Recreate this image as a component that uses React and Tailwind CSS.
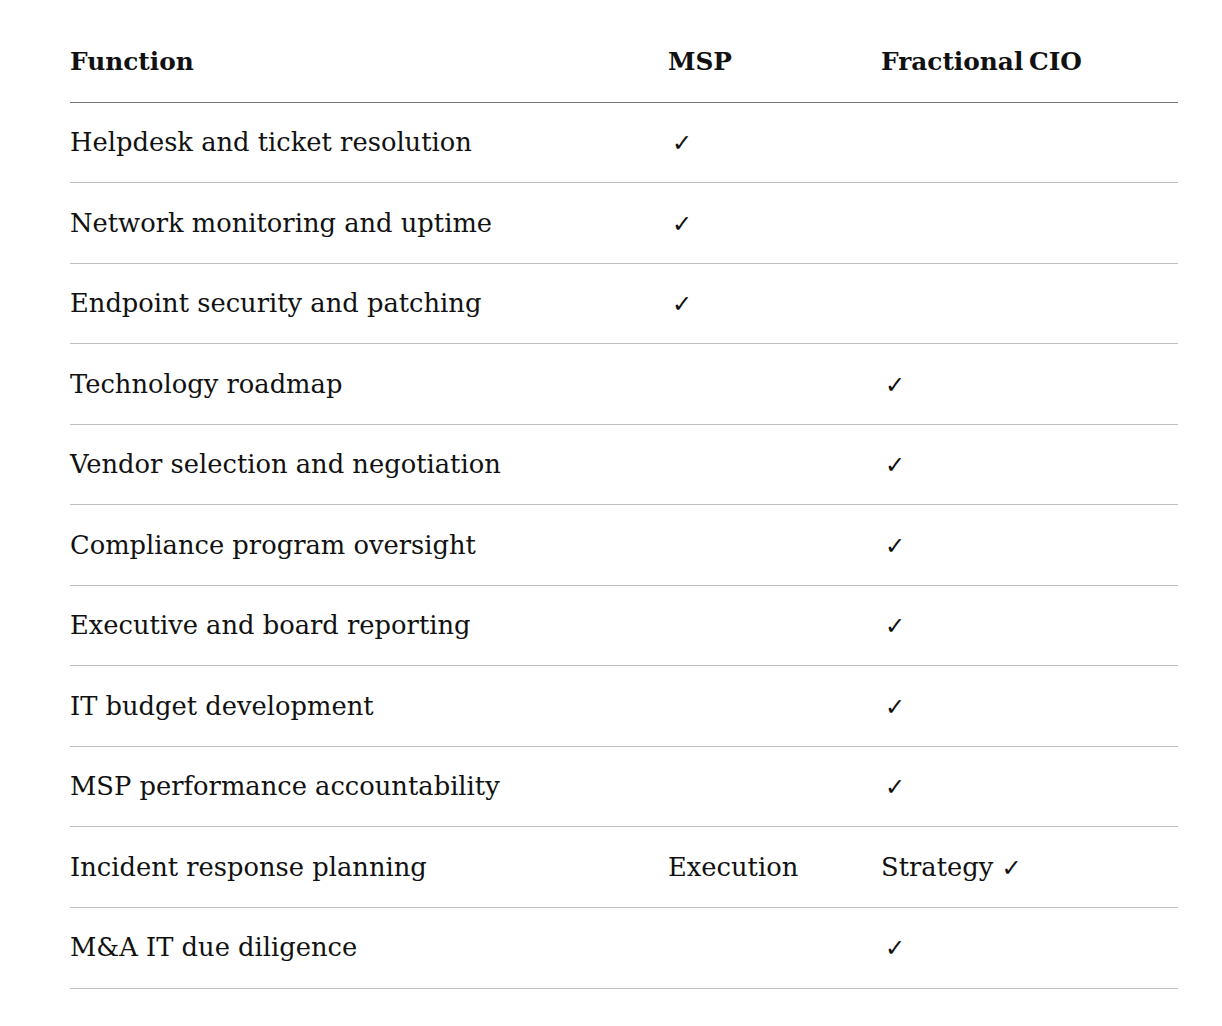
import React from 'react';

const rows = [
  ['Helpdesk and ticket resolution', true, null],
  ['Network monitoring and uptime', true, null],
  ['Endpoint security and patching', true, null],
  ['Technology roadmap', null, true],
  ['Vendor selection and negotiation', null, true],
  ['Compliance program oversight', null, true],
  ['Executive and board reporting', null, true],
  ['IT budget development', null, true],
  ['MSP performance accountability', null, true],
  ['Incident response planning', 'Execution', 'Strategy'],
  ['M&A IT due diligence', null, true],
];

function Check() {
  return <span className="font-['DejaVu_Sans',sans-serif] text-[24px]">✓</span>;
}

export default function App() {
  return (
    <div className="bg-white min-h-screen pt-[22px] pl-[70px] font-['DejaVu_Serif',serif] text-[#111]">
      <table className="w-[1108px] table-fixed border-collapse text-[25.75px]">
        <colgroup>
          <col className="w-[598px]" />
          <col className="w-[213px]" />
          <col className="w-[297px]" />
        </colgroup>
        <thead>
          <tr className="h-[80px] border-b border-[#7a7a7a] text-left text-[24.8px] [word-spacing:-3px]">
            <th className="p-0 font-bold">Function</th>
            <th className="p-0 font-bold">MSP</th>
            <th className="p-0 font-bold">Fractional CIO</th>
          </tr>
        </thead>
        <tbody>
          {rows.map(([name, msp, cio]) => (
            <tr key={name} className="h-[80.55px] border-b border-[#c0c0c0]">
              <td className="p-0">{name}</td>
              <td className="p-0">
                {msp === true ? <span className="pl-[4px]"><Check /></span> : msp}
              </td>
              <td className="p-0">
                {cio === true && <span className="pl-[4px]"><Check /></span>}
                {cio === 'Strategy' && (
                  <span>
                    Strategy <Check />
                  </span>
                )}
              </td>
            </tr>
          ))}
        </tbody>
      </table>
    </div>
  );
}
